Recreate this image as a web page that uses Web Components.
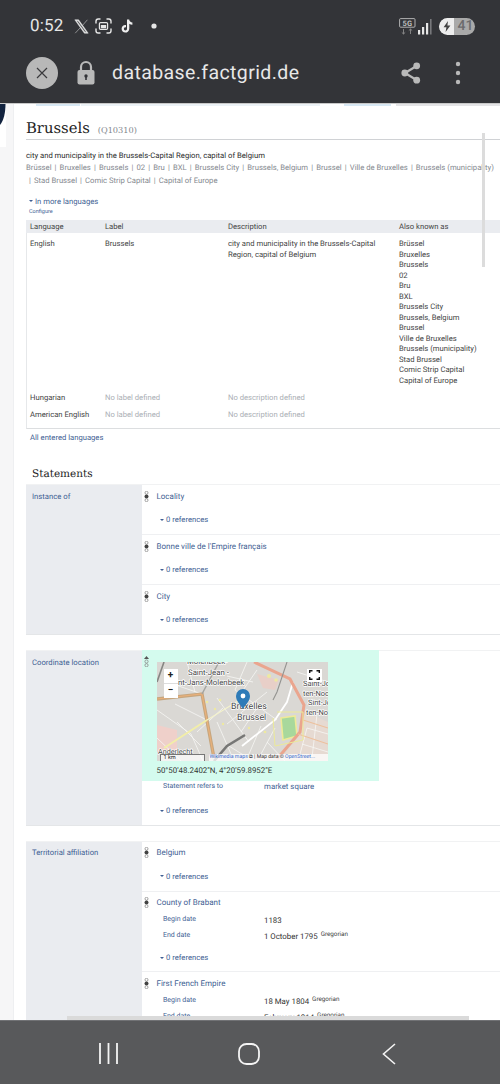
<!DOCTYPE html>
<html>
<head>
<meta charset="utf-8">
<title>Brussels</title>
<style>
    html, body { margin: 0; padding: 0; background: #fff; }
    body { width: 500px; height: 1084px; overflow: hidden; font-family: Roboto, "Liberation Sans", sans-serif; text-rendering: geometricPrecision; }
</style>
</head>
<body>
<phone-shell>
    <status-bar slot="top"></status-bar>
    <browser-bar slot="top"></browser-bar>
    <tab-strip></tab-strip>
    <entity-title label="Brussels" qid="(Q10310)"></entity-title>
    <term-box></term-box>
    <lang-table></lang-table>
    <section-heading>Statements</section-heading>

    <statement-group property="Instance of">
        <statement-item value="Locality"></statement-item>
        <statement-item value="Bonne ville de l'Empire français"></statement-item>
        <statement-item value="City" last></statement-item>
    </statement-group>

    <statement-group property="Coordinate location" style="margin-top:15px">
        <statement-item last preferred>
            <map-panel></map-panel>
            <qualifier-row name="Statement refers to" value="market square" link tight></qualifier-row>
        </statement-item>
    </statement-group>

    <statement-group property="Territorial affiliation" style="margin-top:14.5px">
        <statement-item value="Belgium"></statement-item>
        <statement-item value="County of Brabant" quals>
            <qualifier-row name="Begin date" value="1183"></qualifier-row>
            <qualifier-row name="End date" value="1 October 1795" cal="Gregorian"></qualifier-row>
        </statement-item>
        <statement-item value="First French Empire" quals last norefs>
            <qualifier-row name="Begin date" value="18 May 1804" cal="Gregorian"></qualifier-row>
            <qualifier-row name="End date" value="February 1814" cal="Gregorian"></qualifier-row>
        </statement-item>
    </statement-group>
    <nav-bar slot="bottom"></nav-bar>
</phone-shell>

<script>
class PhoneShell extends HTMLElement {
    constructor() {
        super();
        this.attachShadow({ mode: 'open' });
        this.shadowRoot.innerHTML = `
            <style>
                :host { display: flex; flex-direction: column; width: 500px; height: 1084px; overflow: hidden; position: relative; }
                .view { flex: 1; min-height: 0; display: flex; overflow: hidden; position: relative; }
                .gutter { width: 14px; flex: none; background: #f6f6f7; border-right: 1px solid #eeeff1; box-sizing: border-box; position: relative; }
                .gutter .notch { background: #fff; width: 6px; height: 43px; overflow: hidden; }
                .gutter svg { display: block; }
                .page { flex: 1; min-width: 0; background: #fff; padding-left: 12px; overflow: hidden; }
                .vbar { position: absolute; left: 482px; top: 29px; width: 3px; height: 134px; background: #dcdcdc; }
                .hbar { position: absolute; left: 67px; bottom: 0; width: 402px; height: 4px; background: #dadada; }
            </style>
            <slot name="top"></slot>
            <div class="view">
                <div class="gutter">
                    <div class="notch">
                        <svg width="6" height="22" viewBox="0 0 6 22"><path d="M0 0H5.5C5.5 9 3.5 17 0 21Z" fill="#12233f"/></svg>
                    </div>
                </div>
                <div class="page"><slot></slot></div>
                <div class="vbar"></div>
                <div class="hbar"></div>
            </div>
            <slot name="bottom"></slot>
        `;
    }
}

class StatusBar extends HTMLElement {
    constructor() {
        super();
        this.attachShadow({ mode: 'open' });
        this.shadowRoot.innerHTML = `
            <style>
                :host { display: flex; align-items: center; height: 52px; padding: 0 25px 0 30px; background: #333438; color: #e6e6e6; box-sizing: border-box; font-family: Roboto, sans-serif; }
                .time { font-size: 17px; width: 44px; letter-spacing: .2px; }
                .icons { display: flex; align-items: center; gap: 6px; flex: 1; }
                svg { display: block; }
                .batt { width: 36px; height: 17px; border-radius: 9px; background: #a9a9a9; overflow: hidden; display: flex; font-size: 14px; font-weight: 500; color: #6b6b6d; }
                .batt b { width: 15px; background: #ededed; display: flex; align-items: center; justify-content: center; border-radius: 9px 0 0 9px; }
                .batt span { line-height: 17px; }
                .right { display: flex; align-items: center; gap: 2px; }
            </style>
            <span class="time">0:52</span>
            <div class="icons">
                <svg width="15" height="15" viewBox="0 0 15 15"><path d="M.8.8H4.6L14.2 14.2H10.4ZM2.6 1.8 11 13.2H12.4L4 1.8Z M13.4.8 8.3 6.6M6.6 8.4 1.2 14.2" fill="#e6e6e6" stroke="#e6e6e6" stroke-width=".5" fill-rule="evenodd"/></svg>
                <svg width="17" height="16" viewBox="0 0 17 16" fill="none" stroke="#e6e6e6" stroke-width="1.4" stroke-linecap="round"><path d="M1 5V3.2Q1 1 3.2 1H5M12 1H13.8Q16 1 16 3.2V5M16 11V12.8Q16 15 13.8 15H12M5 15H3.2Q1 15 1 12.8V11"/><rect x="4.4" y="4.6" width="8.2" height="6.8" rx="1.2" stroke-width="1.2"/><rect x="5.8" y="7" width="5.4" height="3.2" fill="#e6e6e6" stroke="none"/></svg>
                <svg width="12" height="14" viewBox="0 0 12 14" style="margin-left:3px"><path d="M6 .5H8.2C8.4 2.2 9.6 3.4 11.4 3.5V5.8C10.2 5.8 9.1 5.4 8.3 4.8V9.4C8.3 12 6.4 13.6 4.3 13.6 2.2 13.6.6 11.9.6 9.8.6 7.4 2.7 5.7 5 6.1V8.4C3.9 8 2.9 8.8 2.9 9.8 2.9 10.7 3.6 11.4 4.4 11.4 5.3 11.4 6 10.7 6 9.7Z" fill="#efefef"/></svg>
                <svg width="6" height="6" viewBox="0 0 6 6" style="margin-left:12px"><circle cx="3" cy="3" r="2.6" fill="#e6e6e6"/></svg>
            </div>
            <div class="right">
                <svg width="17" height="17" viewBox="0 0 17 17" fill="none"><rect x=".6" y=".6" width="15.4" height="8.6" rx="1" stroke="#bfbfbf" stroke-width=".9"/><text x="8.3" y="7.9" text-anchor="middle" font-size="7.5" font-weight="700" font-family="Roboto" fill="#bfbfbf">5G</text><path d="M4.5 11V16M2.8 14.4 4.5 16 6.2 14.4" stroke="#8b8b8b" stroke-width=".9"/><path d="M11.5 16V11M9.8 12.6 11.5 11 13.2 12.6" stroke="#8b8b8b" stroke-width=".9"/></svg>
                <svg width="14" height="17" viewBox="0 0 14 17" style="margin-right:5px"><rect x="0" y="12" width="2.2" height="4.5" fill="#e6e6e6"/><rect x="4" y="9" width="2.2" height="7.5" fill="#e6e6e6"/><rect x="8" y="5" width="2.2" height="11.5" fill="#e6e6e6"/><rect x="12" y="1" width="1.6" height="15.5" fill="#77787b"/></svg>
                <div class="batt"><b><svg width="8" height="11" viewBox="0 0 8 11"><path d="M5 0 .6 6.2H3.4L2.6 11 7.4 4.4H4.4Z" fill="#444"/></svg></b><span>&nbsp;41</span></div>
            </div>
        `;
    }
}

class BrowserBar extends HTMLElement {
    constructor() {
        super();
        this.attachShadow({ mode: 'open' });
        this.shadowRoot.innerHTML = `
            <style>
                :host { display: flex; align-items: center; height: 52px; padding: 0 0 10px 26px; background: #333438; border-bottom: 1px solid #c9c9c9; box-sizing: border-box; color: #e8e8e8; font-family: Roboto, sans-serif; }
                .close { width: 32px; height: 32px; border-radius: 50%; background: #b8b8b8; display: flex; align-items: center; justify-content: center; flex: none; }
                .lock { margin-left: 19px; flex: none; display: block; }
                .url { margin-left: 17px; font-size: 19.5px; letter-spacing: .4px; flex: 1; white-space: nowrap; }
                .share { display: block; margin-right: 34px; }
                .dots { display: block; margin-right: 39px; }
            </style>
            <div class="close"><svg width="12" height="12" viewBox="0 0 12 12"><path d="M1 1 11 11M11 1 1 11" stroke="#3a3a3d" stroke-width="1.2"/></svg></div>
            <svg class="lock" width="18" height="25" viewBox="0 0 18 25"><path d="M4 11V7a5 5 0 0 1 10 0v4" fill="none" stroke="#b9b9b9" stroke-width="2.2"/><rect x=".5" y="10" width="17" height="14.5" rx="2" fill="#b9b9b9"/><circle cx="9" cy="16" r="1.7" fill="#333438"/><rect x="8.2" y="16" width="1.6" height="4" fill="#333438"/></svg>
            <span class="url">database.factgrid.de</span>
            <svg class="share" width="20" height="22" viewBox="0 0 20 22"><path d="M15.5 4 4 11 15.5 18" fill="none" stroke="#b9b9b9" stroke-width="2.2"/><circle cx="15.7" cy="3.8" r="3.4" fill="#b9b9b9"/><circle cx="3.8" cy="11" r="3.4" fill="#b9b9b9"/><circle cx="15.7" cy="18.2" r="3.4" fill="#b9b9b9"/></svg>
            <svg class="dots" width="6" height="24" viewBox="0 0 6 24"><circle cx="3" cy="3" r="2.2" fill="#b9b9b9"/><circle cx="3" cy="12" r="2.2" fill="#b9b9b9"/><circle cx="3" cy="21" r="2.2" fill="#b9b9b9"/></svg>
        `;
    }
}

class TabStrip extends HTMLElement {
    constructor() {
        super();
        this.attachShadow({ mode: 'open' });
        this.shadowRoot.innerHTML = `
            <style>
                :host { display: flex; height: 2px; margin-left: 10px; }
                i { display: block; height: 2px; }
            </style>
            <i style="width:44px;background:#d8e8f4"></i>
            <i style="width:242px;margin-left:1px;background:#ecf2f6"></i>
            <i style="width:48px;margin-left:24px;background:#d8e8f4"></i>
            <i style="width:105px;margin-left:5px;background:#e4e4e6"></i>
        `;
    }
}

class EntityTitle extends HTMLElement {
    constructor() {
        super();
        this.attachShadow({ mode: 'open' });
        const label = this.getAttribute('label');
        const qid = this.getAttribute('qid');
        this.shadowRoot.innerHTML = `
            <style>
                :host { display: block; height: 34px; padding-top: 10px; box-sizing: border-box; border-bottom: 1px solid #d0d2d5; font-family: "DejaVu Serif", serif; white-space: nowrap; }
                .label { font-size: 14.8px; line-height: 25px; color: #222; }
                .qid { font-size: 8.2px; color: #80858b; margin-left: 8px; }
            </style>
            <span class="label">${label}</span><span class="qid">${qid}</span>
        `;
    }
}

class TermBox extends HTMLElement {
    constructor() {
        super();
        this.attachShadow({ mode: 'open' });
        const aliases = ['Brüssel', 'Bruxelles', 'Brussels', '02', 'Bru', 'BXL', 'Brussels City', 'Brussels, Belgium', 'Brussel', 'Ville de Bruxelles', 'Brussels (municipality)'];
        const more = ['Stad Brussel', 'Comic Strip Capital', 'Capital of Europe'];
        const sep = '<i>|</i>';
        this.shadowRoot.innerHTML = `
            <style>
                :host { display: block; font-size: 7.7px; white-space: nowrap; overflow: visible; }
                .desc { margin-top: 10px; line-height: 11px; color: #2b2b2b; }
                .aliases { line-height: 13px; color: #85898f; }
                i { font-style: normal; margin: 0 3.1px; color: #85898f; }
                .more { margin-top: 8.5px; padding-left: 3px; line-height: 12px; color: #3f5f94; }
                .more span { display: inline-block; width: 0; height: 0; border: 2px solid transparent; border-top: 2.5px solid #3f5f94; border-bottom: 0; vertical-align: 1.5px; margin-right: 2px; }
                .conf { padding-left: 3px; font-size: 5.5px; line-height: 8px; color: #3f5f94; margin-top: .5px; }
            </style>
            <div class="desc">city and municipality in the Brussels-Capital Region, capital of Belgium</div>
            <div class="aliases">${aliases.join(sep)}</div>
            <div class="aliases"><i style="margin-left:3px">|</i>${more.join(sep)}</div>
            <div class="more"><span></span>In more languages</div>
            <div class="conf">Configure</div>
        `;
    }
}

class LangTable extends HTMLElement {
    constructor() {
        super();
        this.attachShadow({ mode: 'open' });
        const akas = ['Brüssel', 'Bruxelles', 'Brussels', '02', 'Bru', 'BXL', 'Brussels City', 'Brussels, Belgium', 'Brussel', 'Ville de Bruxelles', 'Brussels (municipality)', 'Stad Brussel', 'Comic Strip Capital', 'Capital of Europe'];
        this.shadowRoot.innerHTML = `
            <style>
                :host { display: block; margin-top: 4px; font-size: 7.65px; color: #444; white-space: nowrap; }
                .t { border-left: 1px solid #e6e8ea; border-bottom: 1px solid #dcdee0; }
                .r { display: grid; grid-template-columns: 75px 123px 171px 1fr; padding-left: 3px; }
                .h { background: #eaecf0; height: 13px; line-height: 13px; margin-left: -1px; padding-left: 4px; }
                .b { padding-top: 6px; line-height: 10.5px; height: 156px; box-sizing: border-box; }
                .s { height: 17px; line-height: 17px; }
                .s.a { height: 22px; }
                .none { color: #abafb5; }
                .link { height: 20px; padding: 3px 0 0 4px; box-sizing: border-box; line-height: 12px; color: #3f5f94; }
                .aka div { height: 10.5px; }
            </style>
            <div class="t">
                <div class="r h"><span>Language</span><span>Label</span><span>Description</span><span>Also known as</span></div>
                <div class="r b">
                    <span>English</span><span>Brussels</span>
                    <span>city and municipality in the Brussels-Capital<br>Region, capital of Belgium</span>
                    <span class="aka">${akas.map(a => `<div>${a}</div>`).join('')}</span>
                </div>
                <div class="r s"><span>Hungarian</span><span class="none">No label defined</span><span class="none">No description defined</span><span></span></div>
                <div class="r s a"><span>American English</span><span class="none">No label defined</span><span class="none">No description defined</span><span></span></div>
            </div>
            <div class="link">All entered languages</div>
        `;
    }
}

class SectionHeading extends HTMLElement {
    constructor() {
        super();
        this.attachShadow({ mode: 'open' });
        this.shadowRoot.innerHTML = `
            <style>
                :host { display: block; height: 35px; padding: 17px 0 0 6px; box-sizing: border-box; font-family: "DejaVu Serif", serif; font-size: 10.5px; line-height: 16px; color: #222; }
            </style>
            <slot></slot>
        `;
    }
}

class StatementGroup extends HTMLElement {
    constructor() {
        super();
        this.attachShadow({ mode: 'open' });
        const property = this.getAttribute('property');
        this.shadowRoot.innerHTML = `
            <style>
                :host { display: grid; grid-template-columns: 116px 1fr; border-bottom: 1px solid #e4e6e8; border-top: 1px solid #f1f2f3; font-size: 7.7px; }
                .prop { background: #eaecf0; padding: 5.5px 0 0 6px; line-height: 12px; color: #3f5f94; }
                .vals { min-width: 0; }
            </style>
            <div class="prop">${property}</div>
            <div class="vals"><slot></slot></div>
        `;
    }
}

class StatementItem extends HTMLElement {
    constructor() {
        super();
        this.attachShadow({ mode: 'open' });
        const value = this.getAttribute('value');
        const preferred = this.hasAttribute('preferred');
        const rank = preferred
            ? '<path d="M2.5 0 5 3H0Z" fill="#555"/><circle cx="2.5" cy="5.5" r="1.6" fill="none" stroke="#8a8a8a" stroke-width=".8"/><circle cx="2.5" cy="9.2" r="1.6" fill="none" stroke="#8a8a8a" stroke-width=".8"/>'
            : '<circle cx="2.5" cy="1.8" r="1.5" fill="none" stroke="#8a8a8a" stroke-width=".8"/><circle cx="2.5" cy="5.5" r="2" fill="#444"/><circle cx="2.5" cy="9.2" r="1.5" fill="none" stroke="#8a8a8a" stroke-width=".8"/>';
        this.shadowRoot.innerHTML = `
            <style>
                :host { display: block; position: relative; font-size: 8px; line-height: 12px; border-bottom: 1px solid #eff0f2; }
                :host([last]) { border-bottom: 0; }
                .rank { position: absolute; left: 1.5px; top: 5.5px; z-index: 1; }
                .val { height: 12px; padding: 5.5px 0 0 14.5px; color: #3f5f94; }
                .refs { height: 12px; margin-top: 11.5px; padding: 0 0 8px 18px; font-size: 7.65px; color: #3f5f94; white-space: nowrap; }
                .refs span { display: inline-block; width: 0; height: 0; border: 2px solid transparent; border-top: 2.5px solid #3f5f94; border-bottom: 0; vertical-align: 1.5px; margin-right: 2px; }
                :host([quals]) .quals { padding-top: 4px; margin-bottom: -3.5px; }
                :host([quals]) .refs { padding-bottom: 7px; }
                :host([norefs]) .refs { display: none; }
                :host([norefs]) .quals { padding-bottom: 12px; }
            </style>
            <svg class="rank" width="5" height="11" viewBox="0 0 5 11">${rank}</svg>
            ${value ? `<div class="val">${value}</div>` : ''}
            <div class="quals"><slot></slot></div>
            <div class="refs"><span></span>0 references</div>
        `;
    }
}

class QualifierRow extends HTMLElement {
    constructor() {
        super();
        this.attachShadow({ mode: 'open' });
        const name = this.getAttribute('name');
        const value = this.getAttribute('value');
        const cal = this.getAttribute('cal');
        this.shadowRoot.innerHTML = `
            <style>
                :host { display: grid; grid-template-columns: 101px 1fr; height: 15.7px; padding-left: 21px; white-space: nowrap; }
                :host([tight]) { height: 12.5px; }
                .n { font-size: 7px; color: #3f5f94; line-height: 13px; }
                .v { font-size: 7.85px; color: #333; line-height: 15px; }
                :host([tight]) .n { line-height: 11px; }
                :host([tight]) .v { line-height: 12px; }
                :host([link]) .v { color: #3f5f94; }
                sup { font-size: 6.3px; vertical-align: 3px; line-height: 0; margin-left: 3px; color: #444; }
            </style>
            <span class="n">${name}</span>
            <span class="v">${value}${cal ? `<sup>${cal}</sup>` : ''}</span>
        `;
    }
}

class MapPanel extends HTMLElement {
    constructor() {
        super();
        this.attachShadow({ mode: 'open' });
        this.shadowRoot.innerHTML = `
            <style>
                :host { display: block; width: 237px; height: 131px; background: #d4fbee; padding: 11.5px 0 0 14.5px; box-sizing: border-box; margin-top: -1px; }
                .map { position: relative; width: 171px; height: 99px; overflow: hidden; background: #dad8d4; font-family: Roboto, sans-serif; }
                svg.ground { display: block; position: absolute; inset: 0; }
                .zoom { position: absolute; left: 7px; top: 7px; width: 14px; background: #fff; }
                .zoom div { height: 14px; line-height: 13px; text-align: center; font-size: 10px; font-weight: 700; color: #222; }
                .zoom div + div { border-top: 1px solid #ddd; }
                .full { position: absolute; left: 150px; top: 7px; width: 15px; height: 13px; background: #fff; display: flex; align-items: center; justify-content: center; }
                .bot { position: absolute; left: 3px; right: 0; bottom: 0; height: 7px; display: flex; font-size: 5.2px; line-height: 7px; white-space: nowrap; }
                .scale { width: 45px; background: rgba(255,255,255,.7); border: 0 solid #777; border-width: 1px 1px 0 1px; box-sizing: border-box; padding-left: 3px; line-height: 6px; color: #222; font-size: 5.6px; }
                .attr { flex: 1; margin-left: 4px; background: rgba(255,255,255,.75); padding-left: 1px; color: #333; overflow: hidden; }
                .attr a { color: #36c; }
                .coord { font-size: 7.9px; line-height: 12px; color: #333; padding-top: 4px; white-space: nowrap; }
            </style>
            <div class="map">
                <svg class="ground" width="171" height="99" viewBox="0 0 171 99" fill="none">
                    <path d="M0 63 20 68V90H0Z" fill="#efd0ca"/>
                    <path d="M100 12 122 18 118 28 106 26Z" fill="#e8cfc8"/>
                    <path d="M124 56 138 54 140 74 126 78Z" fill="#a8d89c" stroke="#eeea98" stroke-width="1.6"/>
                    <path d="M148 50 171 60V99H122L140 76Z" fill="#e6dad2"/>
                    <g stroke="#f6f6f4" stroke-width=".8">
                        <path d="M0 48 34 72 46 99M18 42 50 58M60 36 92 80M90 0 78 28 120 58M10 20 45 32M30 0 38 30M70 62 110 30M150 66 171 72M145 82 171 90M150 66 142 96M160 52 155 96M0 76 24 99M20 60 44 84M70 14 96 20M66 46 40 70M100 46 84 70M110 80 128 99M72 84 96 99M100 8 82 34M148 30 171 34M140 10 171 20M60 60 74 92M104 64 92 92M118 66 104 92"/>
                    </g>
                    <path d="M85 84 118 58 130 40 136 20" stroke="#fff" stroke-width="1.8"/>
                    <path d="M0 37 45 32 57 96" stroke="#c6a67e" stroke-width="3.4"/>
                    <path d="M0 37 45 32 57 96" stroke="#eab07a" stroke-width="1.2"/>
                    <path d="M45 32 62 0" stroke="#a3a3a0" stroke-width="1.4"/>
                    <path d="M0 20 7 0" stroke="#858582" stroke-width="1.6"/>
                    <path d="M7 86 50 58" stroke="#f2eea8" stroke-width="2"/>
                    <path d="M50 58 86 36" stroke="#f4f2cc" stroke-width="1.2"/>
                    <path d="M57 99 70 84 88 73" stroke="#777775" stroke-width="2.6"/>
                    <path d="M97 0 133 17 147 43 143 70 120 97" stroke="#eaa58e" stroke-width="3"/>
                    <path d="M130 0 120 30 116 38" stroke="#939390" stroke-width="1.1"/>
                    <path d="M146 58 171 66M141 72 171 82" stroke="#edc09c" stroke-width="1.1"/>
                    <path d="M120 50 146 50 146 78 118 84 116 56" stroke="#ecea98" stroke-width="1"/>
                    <g fill="#eee9a0">
                        <circle cx="50" cy="40" r="1.3"/><circle cx="63" cy="38" r="1.3"/><circle cx="58" cy="47" r="1.2"/><circle cx="66" cy="62" r="1.2"/><circle cx="108" cy="70" r="1.3"/><circle cx="112" cy="14" r="2"/><circle cx="119" cy="18" r="1.8"/><circle cx="92" cy="66" r="1.2"/>
                    </g>
                    <g font-family="Roboto, sans-serif" font-size="7.8" fill="#4a4a4a" stroke="#fff" stroke-width="1.4" paint-order="stroke" stroke-linejoin="round">
                        <text x="30" y="2">Molenbeek-</text>
                        <text x="31" y="13">Saint-Jean -</text>
                        <text x="21" y="23">nt-Jans-Molenbeek</text>
                        <text x="146" y="24" font-size="7.4">Saint-Jo</text>
                        <text x="146" y="34" font-size="7.4">ten-Noo</text>
                        <text x="151" y="43" font-size="7.4">Sint-Jo</text>
                        <text x="149" y="53" font-size="7.4">ten-No</text>
                        <text x="1" y="92" font-size="7.2">Anderlecht</text>
                    </g>
                    <g font-family="Roboto, sans-serif" font-size="8.8" fill="#4a4a4a" stroke="#fff" stroke-width="1.4" paint-order="stroke" stroke-linejoin="round">
                        <text x="74" y="47">Bruxelles</text>
                        <text x="80" y="58">Brussel</text>
                    </g>
                    <path d="M86 47 C83 42 79 39 79 34 A7 7 0 0 1 93 34 C93 39 89 42 86 47Z" fill="#2e7bb8"/>
                    <circle cx="86" cy="34" r="2.4" fill="#fff"/>
                </svg>
                <div class="zoom"><div>+</div><div>−</div></div>
                <div class="full"><svg width="11" height="10" viewBox="0 0 11 10" fill="none" stroke="#111" stroke-width="1.4"><path d="M.7 3V.7H3.5M7.5.7H10.3V3M10.3 7V9.3H7.5M3.5 9.3H.7V7"/></svg></div>
                <div class="bot"><div class="scale">1 km</div><div class="attr"><a>Wikimedia maps</a> ⧉ | Map data © <a>OpenStreet...</a></div></div>
            </div>
            <div class="coord">50°50'48.2402"N, 4°20'59.8952"E</div>
        `;
    }
}

class NavBar extends HTMLElement {
    constructor() {
        super();
        this.attachShadow({ mode: 'open' });
        this.shadowRoot.innerHTML = `
            <style>
                :host { display: flex; align-items: center; height: 64px; flex: none; padding: 2px 0 0 99px; box-sizing: border-box; background: #58595b; border-top: 1px solid #717275; }
                svg { display: block; }
            </style>
            <svg width="19" height="21" viewBox="0 0 19 21"><path d="M1 0V21M9.5 0V21M18 0V21" stroke="#f4f4f4" stroke-width="1.8"/></svg>
            <svg width="22" height="22" viewBox="0 0 22 22" style="margin-left:120px"><rect x="1" y="1" width="20" height="20" rx="7.5" fill="none" stroke="#f4f4f4" stroke-width="1.8"/></svg>
            <svg width="14" height="22" viewBox="0 0 14 22" style="margin-left:122px"><path d="M13 1 1.5 11 13 21" fill="none" stroke="#f4f4f4" stroke-width="1.6"/></svg>
        `;
    }
}

customElements.define('phone-shell', PhoneShell);
customElements.define('status-bar', StatusBar);
customElements.define('browser-bar', BrowserBar);
customElements.define('tab-strip', TabStrip);
customElements.define('entity-title', EntityTitle);
customElements.define('term-box', TermBox);
customElements.define('lang-table', LangTable);
customElements.define('section-heading', SectionHeading);
customElements.define('statement-group', StatementGroup);
customElements.define('statement-item', StatementItem);
customElements.define('qualifier-row', QualifierRow);
customElements.define('map-panel', MapPanel);
customElements.define('nav-bar', NavBar);
</script>
</body>
</html>
